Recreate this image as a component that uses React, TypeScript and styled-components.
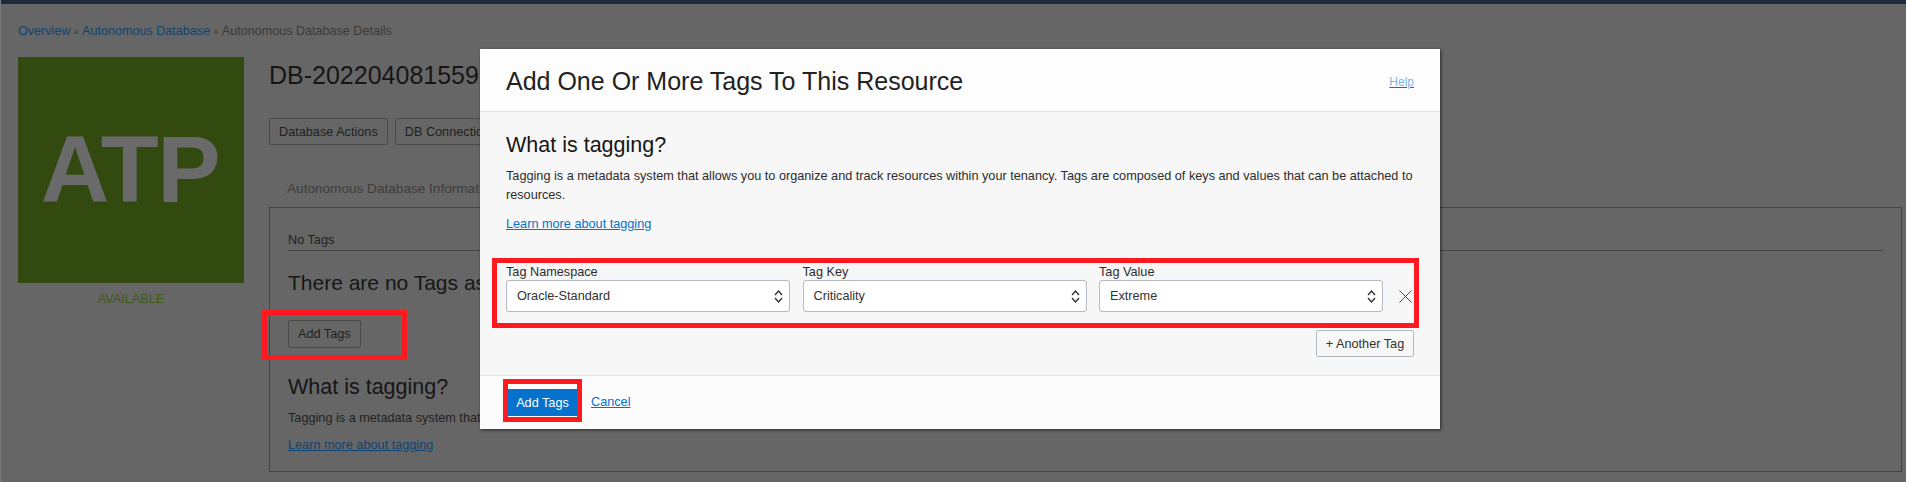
import React from 'react';
import styled, { createGlobalStyle } from 'styled-components';

const GlobalStyle = createGlobalStyle`
  html, body {
    margin: 0;
    padding: 0;
    background: #666;
  }
  * {
    box-sizing: border-box;
  }
`;

const Page = styled.div`
  position: relative;
  width: 1906px;
  height: 482px;
  overflow: hidden;
  background: #666;
  border-left: 1px solid #7a7a7a;
  font-family: 'Liberation Sans', Arial, sans-serif;
  font-size: 12.7px;
  color: #1f1f1f;
`;

const TopBar = styled.div`
  height: 4px;
  background: #1d2b3a;
`;

const Breadcrumb = styled.div`
  display: flex;
  align-items: center;
  margin: 20px 0 0 17px;
  height: 15px;
  line-height: 15px;
  color: #3a3a3a;
  font-size: 12.6px;
  white-space: nowrap;

  a {
    color: #0e4471;
    text-decoration: none;
  }
`;

const Crumb = styled.span`
  margin: 0 3px;
  font-size: 10px;
`;

const Main = styled.div`
  display: flex;
  margin: 18px 0 0 17px;
`;

const Side = styled.div`
  width: 226px;
  flex: none;
  text-align: center;
`;

const Logo = styled.div`
  display: flex;
  align-items: center;
  justify-content: center;
  height: 226px;
  padding: 0 2px 2px 0;
  background: #324a10;
  color: #6a6a6a;
  font-size: 95px;
  font-weight: 700;
  letter-spacing: -1.5px;
`;

const Status = styled.div`
  margin-top: 9px;
  color: #3e5a16;
  line-height: 15px;
`;

const Content = styled.div`
  margin-left: 25px;
  width: 1633px;
`;

const Title = styled.h1`
  margin: 0;
  padding-top: 2px;
  height: 61px;
  font-size: 25px;
  line-height: 32px;
  font-weight: 400;
  color: #161616;
  white-space: nowrap;
`;

const Actions = styled.div`
  display: flex;
  gap: 7px;
`;

const GhostButton = styled.button<{ $tall?: boolean }>`
  height: ${(p) => (p.$tall ? '28px' : '27px')};
  padding: 0 9px;
  border: 1px solid #4a4a4a;
  border-radius: 2px;
  background: transparent;
  color: #1f1f1f;
  font: 12.7px 'Liberation Sans', Arial, sans-serif;
  white-space: nowrap;
`;

const TabLabel = styled.div`
  margin: 36px 0 0 18px;
  height: 26px;
  line-height: 16px;
  font-size: 13.6px;
  color: #3d3d3d;
  white-space: nowrap;
`;

const Panel = styled.section`
  height: 265px;
  padding: 25px 18px 0;
  border: 1px solid #444;
`;

const PanelHead = styled.div`
  height: 18px;
  line-height: 14px;
  border-bottom: 1px solid #444;
`;

const SectionTitle = styled.h2`
  margin: 0;
  font-size: 21.5px;
  line-height: 26px;
  font-weight: 400;
  color: #161616;
  white-space: nowrap;
`;

const EmptyTitle = styled(SectionTitle)`
  margin-top: 19px;
  font-size: 21px;
`;

const AnnotatedSlot = styled.div`
  display: flex;
  width: fit-content;
  margin: 14px 0 0 -26px;
  padding: 5px 41px 7px 21px;
  border: 5px solid #ff1a1f;
`;

const PanelTitle = styled(SectionTitle)`
  margin-top: 14px;
`;

const Copy = styled.p`
  margin: 8px 0 0;
  line-height: 20px;
  color: #222;
`;

const PanelLink = styled.a`
  display: block;
  margin-top: 7px;
  line-height: 20px;
  color: #0e4471;
  text-decoration: underline;
`;

const Modal = styled.div`
  position: absolute;
  left: 479px;
  top: 49px;
  width: 960px;
  height: 380px;
  display: flex;
  flex-direction: column;
  background: #fcfcfc;
  box-shadow: 1px 1px 3px rgba(0, 0, 0, 0.6);
`;

const ModalHeader = styled.header`
  display: flex;
  align-items: center;
  justify-content: space-between;
  height: 63px;
  padding: 2px 26px 0;
  border-bottom: 1px solid #e2e2e2;
  background: #fdfdfd;
`;

const ModalTitle = styled.h2`
  margin: 0;
  font-size: 25px;
  font-weight: 400;
  color: #222;
`;

const HelpLink = styled.a`
  margin-top: 2px;
  font-size: 12px;
  color: #7fb6ea;
  text-decoration: underline;
  text-decoration-color: #0572ce;
`;

const ModalBody = styled.div`
  height: 263px;
  padding: 20px 26px 0;
  background: #f7f7f7;
`;

const BodyCopy = styled.p`
  margin: 9px 0 0;
  line-height: 19px;
  color: #2c2c2c;
`;

const BlueLink = styled.a`
  color: #0572ce;
  text-decoration: underline;
`;

const LearnRow = styled.div`
  margin-top: 9px;
  line-height: 20px;
`;

const TagBox = styled.div`
  display: flex;
  align-items: flex-start;
  margin: 24px 0 0 -14px;
  width: 927px;
  height: 70px;
  padding: 4px 0 0 9px;
  border: 5px solid #ff1a1f;
`;

const Field = styled.div`
  width: 284px;
  margin-right: 12.5px;
`;

const FieldLabel = styled.label`
  display: block;
  height: 13px;
  line-height: 11px;
  color: #2c2c2c;
`;

const Select = styled.div`
  display: flex;
  align-items: center;
  justify-content: space-between;
  height: 32px;
  padding: 0 6px 0 10px;
  background: #fff;
  border: 1px solid #b3bac1;
  border-radius: 3px;
  color: #333;
`;

const RemoveIcon = styled.svg`
  margin: 23px 0 0 3.5px;
  flex: none;
`;

const BoxActions = styled.div`
  display: flex;
  justify-content: flex-end;
  margin-top: 2px;
`;

const AnotherButton = styled.button`
  width: 98px;
  height: 27px;
  padding: 0;
  border: 1px solid #b3bac1;
  border-radius: 2px;
  background: #f7f7f7;
  color: #333;
  font: 12.7px 'Liberation Sans', Arial, sans-serif;
`;

const ModalFooter = styled.footer`
  display: flex;
  align-items: flex-start;
  flex: 1;
  padding: 3px 0 0 23px;
  border-top: 1px solid #e4e4e4;
  background: #fcfcfc;
`;

const PrimarySlot = styled.div`
  width: 79px;
  height: 43px;
  margin-right: 9px;
  padding-top: 5px;
  border: 5px solid #ff1a1f;
  background: #fff;
`;

const PrimaryButton = styled.button`
  display: block;
  width: 69px;
  height: 27px;
  padding: 0;
  border: none;
  background: #0572ce;
  color: #fff;
  font: 12.7px 'Liberation Sans', Arial, sans-serif;
`;

const CancelLink = styled(BlueLink)`
  margin-top: 16px;
`;

function Chevrons() {
  return (
    <svg width="9" height="13" viewBox="0 0 9 13" fill="none" stroke="#333" strokeWidth="1.4">
      <path d="M1 5 L4.5 1 L8 5" />
      <path d="M1 8 L4.5 12 L8 8" />
    </svg>
  );
}

const tagFields = [
  { label: 'Tag Namespace', value: 'Oracle-Standard' },
  { label: 'Tag Key', value: 'Criticality' },
  { label: 'Tag Value', value: 'Extreme' },
];

export default function App() {
  return (
    <>
      <GlobalStyle />
      <Page>
        <TopBar />
        <Breadcrumb>
          <a href="#">Overview</a>
          <Crumb>»</Crumb>
          <a href="#">Autonomous Database</a>
          <Crumb>»</Crumb>
          Autonomous Database Details
        </Breadcrumb>
        <Main>
          <Side>
            <Logo>ATP</Logo>
            <Status>AVAILABLE</Status>
          </Side>
          <Content>
            <Title>DB-202204081559</Title>
            <Actions>
              <GhostButton>Database Actions</GhostButton>
              <GhostButton>DB Connection</GhostButton>
            </Actions>
            <TabLabel>Autonomous Database Information</TabLabel>
            <Panel>
              <PanelHead>No Tags</PanelHead>
              <EmptyTitle>There are no Tags as</EmptyTitle>
              <AnnotatedSlot>
                <GhostButton $tall>Add Tags</GhostButton>
              </AnnotatedSlot>
              <PanelTitle>What is tagging?</PanelTitle>
              <Copy>Tagging is a metadata system that</Copy>
              <PanelLink href="#">Learn more about tagging</PanelLink>
            </Panel>
          </Content>
        </Main>

        <Modal>
          <ModalHeader>
            <ModalTitle>Add One Or More Tags To This Resource</ModalTitle>
            <HelpLink href="#">Help</HelpLink>
          </ModalHeader>
          <ModalBody>
            <SectionTitle>What is tagging?</SectionTitle>
            <BodyCopy>
              Tagging is a metadata system that allows you to organize and track resources within your tenancy. Tags are
              composed of keys and values that can be attached to resources.
            </BodyCopy>
            <LearnRow>
              <BlueLink href="#">Learn more about tagging</BlueLink>
            </LearnRow>
            <TagBox>
              {tagFields.map((f) => (
                <Field key={f.label}>
                  <FieldLabel>{f.label}</FieldLabel>
                  <Select>
                    {f.value}
                    <Chevrons />
                  </Select>
                </Field>
              ))}
              <RemoveIcon width="13" height="13" viewBox="0 0 13 13" fill="none" stroke="#333" strokeWidth="0.9">
                <path d="M0.5 0.5 L12.5 12.5 M12.5 0.5 L0.5 12.5" />
              </RemoveIcon>
            </TagBox>
            <BoxActions>
              <AnotherButton>+ Another Tag</AnotherButton>
            </BoxActions>
          </ModalBody>
          <ModalFooter>
            <PrimarySlot>
              <PrimaryButton>Add Tags</PrimaryButton>
            </PrimarySlot>
            <CancelLink href="#">Cancel</CancelLink>
          </ModalFooter>
        </Modal>
      </Page>
    </>
  );
}
